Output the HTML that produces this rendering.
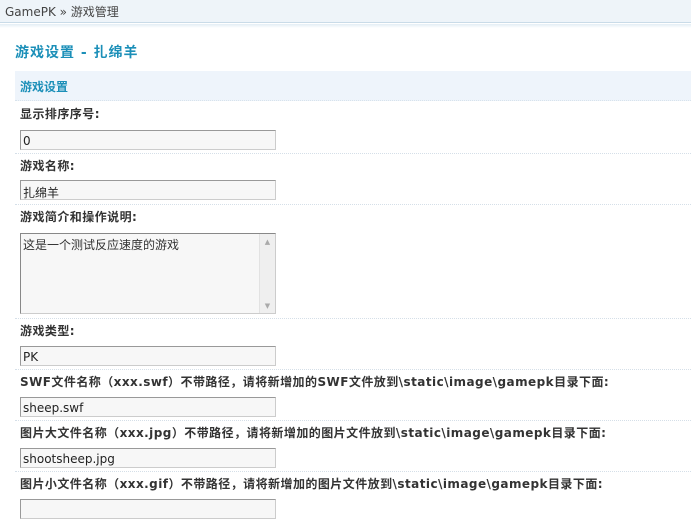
<!DOCTYPE html>
<html><head><meta charset="utf-8"><style>
*{margin:0;padding:0;box-sizing:border-box}
body{width:691px;height:521px;overflow:hidden;background:#fff;font-family:"DejaVu Sans","Noto Sans CJK SC",sans-serif;font-size:12px;color:#333;position:relative}
.top{position:absolute;left:0;top:0;width:691px;height:23px;background:#eef4f9;border-bottom:1px solid #c9dbe8;padding:3px 0 0 5px;color:#444;font-size:12px}
.top2{position:absolute;left:0;top:24px;width:691px;height:4px;background:linear-gradient(#e3edf5,#fff)}
.title{position:absolute;left:15px;top:42px;font-size:14px;font-weight:bold;color:#1b8fb8;letter-spacing:1px}
.sec{position:absolute;left:15px;top:71px;width:676px;height:30px;background:#eef4fb;border-bottom:1px dotted #d8e3ec;padding:7px 0 0 5px;font-weight:bold;color:#1b8fb8;font-size:12px}
.lab{position:absolute;left:20px;font-weight:bold;color:#333;font-size:12px;white-space:nowrap;letter-spacing:0.45px}
.inp{position:absolute;left:20px;width:256px;height:20px;border:1px solid #999;border-right-color:#ccc;border-bottom-color:#ccc;background:#f7f7f7;padding:3px 0 0 2px;font-size:12px;color:#222}
.sep{position:absolute;left:15px;width:676px;border-top:1px dotted #d5dfe8}
.ta{position:absolute;left:20px;top:233px;width:256px;height:81px;border:1px solid #888;border-right-color:#ccc;border-bottom-color:#ccc;background:#f7f7f7;padding:2px 0 0 2px;font-size:12px}
.sb{position:absolute;right:0;top:0;width:16px;height:79px;background:#efefef;border-left:1px solid #e2e2e2;color:#aaa;font-size:7px;text-align:center}
</style></head><body>
<div class="top">GamePK » 游戏管理</div>
<div class="top2"></div>
<div class="title">游戏设置 - 扎绵羊</div>
<div class="sec">游戏设置</div>
<div class="lab" style="top:105px">显示排序序号:</div>
<div class="inp" style="top:130px">0</div>
<div class="sep" style="top:153px"></div>
<div class="lab" style="top:157px">游戏名称:</div>
<div class="inp" style="top:180px">扎绵羊</div>
<div class="sep" style="top:204px"></div>
<div class="lab" style="top:208px">游戏简介和操作说明:</div>
<div class="ta">这是一个测试反应速度的游戏<div class="sb"><div style="margin-top:4px">▲</div><div style="margin-top:56px">▼</div></div></div>
<div class="sep" style="top:318px"></div>
<div class="lab" style="top:322px">游戏类型:</div>
<div class="inp" style="top:346px">PK</div>
<div class="sep" style="top:369px"></div>
<div class="lab" style="top:373px">SWF文件名称（xxx.swf）不带路径，请将新增加的SWF文件放到\static\image\gamepk目录下面:</div>
<div class="inp" style="top:397px">sheep.swf</div>
<div class="sep" style="top:420px"></div>
<div class="lab" style="top:424px">图片大文件名称（xxx.jpg）不带路径，请将新增加的图片文件放到\static\image\gamepk目录下面:</div>
<div class="inp" style="top:448px">shootsheep.jpg</div>
<div class="sep" style="top:471px"></div>
<div class="lab" style="top:475px">图片小文件名称（xxx.gif）不带路径，请将新增加的图片文件放到\static\image\gamepk目录下面:</div>
<div class="inp" style="top:499px"></div>
</body></html>
